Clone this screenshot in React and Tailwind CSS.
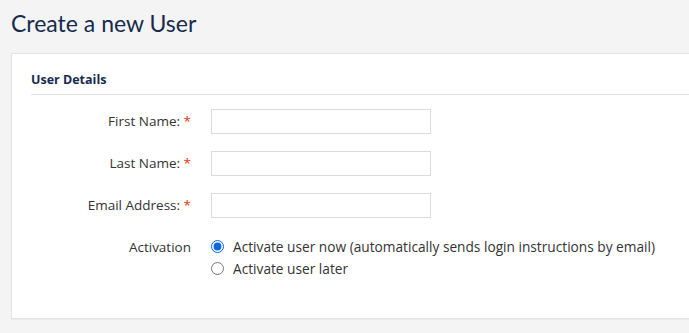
import { useState } from 'react';

const FIELDS = [
  { id: 'firstName', label: 'First Name:' },
  { id: 'lastName', label: 'Last Name:' },
  { id: 'email', label: 'Email Address:' },
];

export default function App() {
  const [activation, setActivation] = useState('now');

  return (
    <div className="min-h-screen bg-[#f4f4f4] pl-[11px] pt-[8px] font-['Open_Sans',sans-serif]">
      <h1 className="font-['Lato',sans-serif] text-[23px] leading-[30px] text-[#172b4d]">Create a new User</h1>

      <div className="mt-[15px] bg-white border border-r-0 border-[#e3e3e3] shadow-[0_1px_0_#ececec] pl-[19px] pb-[38px]">
        <div className="pt-[18px] pb-[6px] border-b border-[#e3e3e3]">
          <h2 className="text-[12.5px] leading-[16px] font-bold text-[#172b4d]">User Details</h2>
        </div>

        <div className="pt-[14px] flex flex-col gap-[17px]">
          {FIELDS.map((f) => (
            <div key={f.id} className="flex items-center gap-[20px]">
              <label className="w-[160px] text-right text-[13.5px] leading-[25px] text-[#333]">
                {f.label} <span className="text-[#de350b]">*</span>
              </label>
              <input type="text" className="w-[220px] h-[25px] border border-[#dcdcdc] bg-white outline-none" />
            </div>
          ))}

          <div className="flex items-start gap-[20px] pt-[0.5px]">
            <div className="w-[160px] text-right text-[13.5px] leading-[22px] text-[#333]">Activation</div>
            <div className="flex flex-col text-[13.7px] leading-[22px] text-[#333]">
              <label className="flex items-center gap-[9px]">
                <input
                  type="radio"
                  name="activation"
                  checked={activation === 'now'}
                  onChange={() => setActivation('now')}
                  className="m-0 w-[13px] h-[13px] accent-[#0b66e4]"
                />
                Activate user now (automatically sends login instructions by email)
              </label>
              <label className="flex items-center gap-[9px]">
                <input
                  type="radio"
                  name="activation"
                  checked={activation === 'later'}
                  onChange={() => setActivation('later')}
                  className="m-0 w-[13px] h-[13px] accent-[#0b66e4]"
                />
                Activate user later
              </label>
            </div>
          </div>
        </div>
      </div>
    </div>
  );
}
